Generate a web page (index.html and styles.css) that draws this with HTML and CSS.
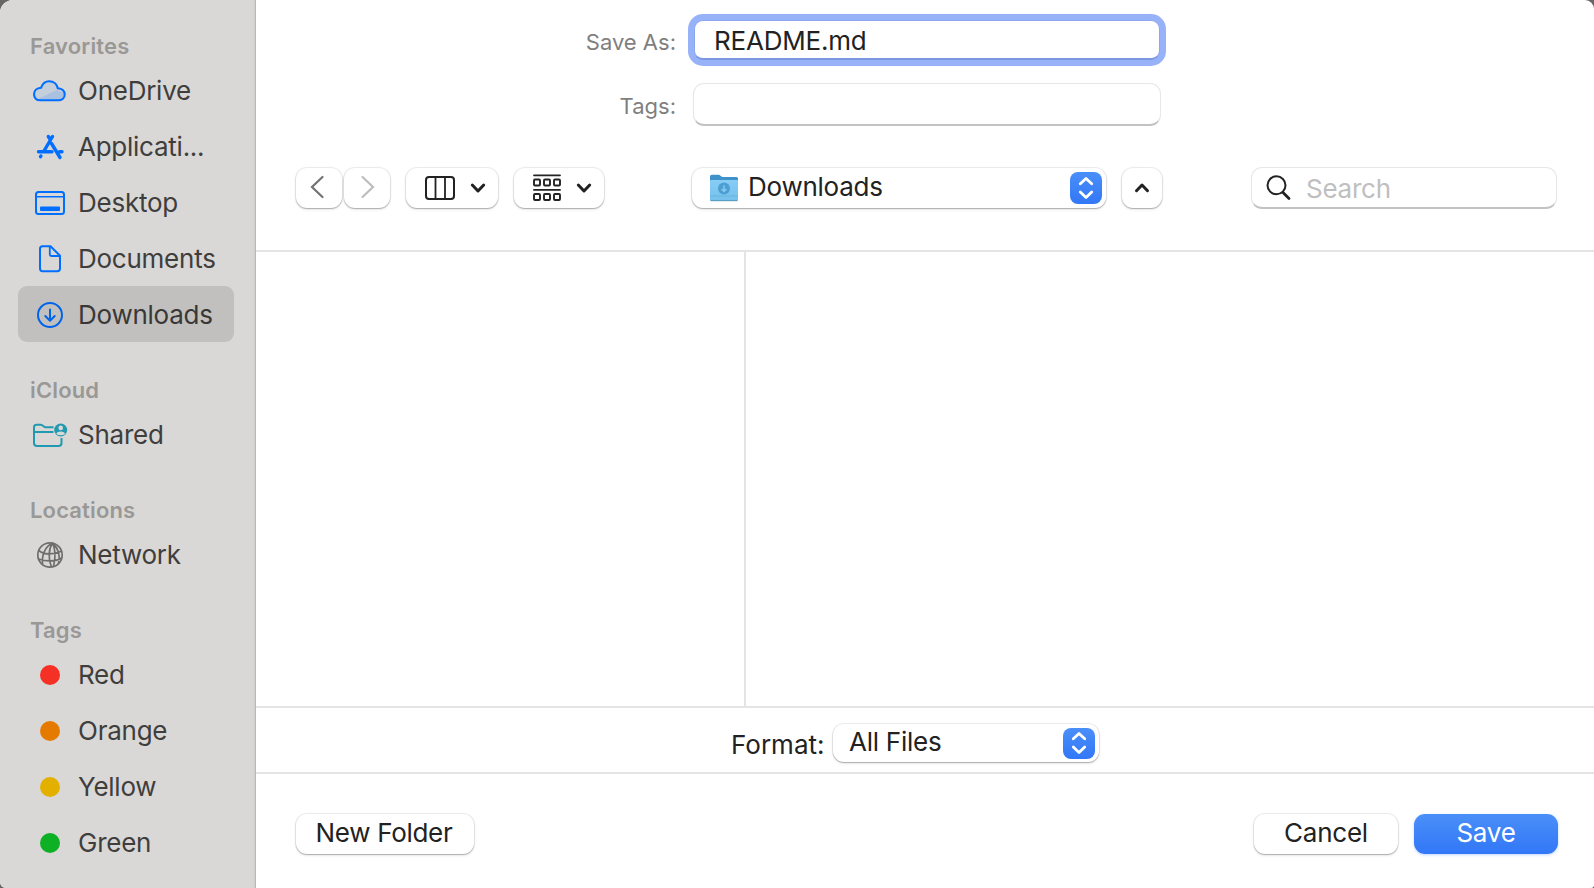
FILE: index.html
```
<!DOCTYPE html>
<html lang="en">
<head>
<meta charset="utf-8">
<title>Save</title>
<link rel="stylesheet" href="styles.css">
</head>
<body>
<div class="window">
  <nav class="sidebar">
    <h2 class="heading first">Favorites</h2>
    <a class="item"><span class="icon"><svg width="36" height="28" viewBox="0 0 36 28"><path d="M9 23.500C5.500 23.500 3 21 3 17.500C3 14 5.600 11.500 9.500 11.200C10.500 7.500 13.500 4.500 18 4.500C22.300 4.500 25.500 7 26.700 11.200C30.500 11.500 33.300 14 33.300 17.500C33.300 21 30.500 23.500 27 23.500Z" fill="#c5cfdb"/><path d="M6 22.500L25.500 13L32.500 16Q33.500 23 27 23.500H9Z" fill="#a9c0e0"/><path d="M9 23.300C5.500 23.300 3 21 3 17.300C3 13.900 5.700 11 10 10.800C11.200 7.500 14 4.300 18.200 4.300C22.800 4.300 26 7.500 26.800 11.200C31 11.600 33.700 14 33.700 17.500C33.700 20.800 31 23.300 27.300 23.300Z" fill="none" stroke="#006eff" stroke-width="2.100"/></svg></span>OneDrive</a>
    <a class="item"><span class="icon"><svg width="36" height="28" viewBox="0 0 36 28" fill="none" stroke="#006eff" stroke-width="3.400" stroke-linecap="round"><path d="M20.500 3.500L12 18M16.300 3.500L18.300 6.500M6.500 18.700H20M27.500 18.700H30M19.500 10.500L28 24.500"/><path d="M8.900 23L8.500 23.700"/></svg></span>Applicati...</a>
    <a class="item"><span class="icon"><svg width="36" height="28" viewBox="0 0 36 28"><rect x="4" y="3" width="28" height="22" rx="2.500" fill="none" stroke="#006eff" stroke-width="2"/><path d="M4 7.800H32" stroke="#006eff" stroke-width="1.600"/><rect x="8" y="17.500" width="20" height="4.500" rx="1" fill="#006eff"/></svg></span>Desktop</a>
    <a class="item"><span class="icon"><svg width="36" height="30" viewBox="0 0 36 30" fill="none" stroke="#006eff" stroke-width="2" stroke-linejoin="round"><path d="M10.500 2.200H18.500L28 11.700V24.500Q28 27.200 25.300 27.200H10.500Q8 27.200 8 24.500V4.700Q8 2.200 10.500 2.200Z"/><path d="M17.800 2.500V10.500Q17.800 12 19.300 12H27.500" stroke-width="1.800"/></svg></span>Documents</a>
    <a class="item selected"><span class="icon"><svg width="36" height="30" viewBox="0 0 36 30" fill="none" stroke="#0064ea" stroke-width="2" stroke-linecap="round" stroke-linejoin="round"><circle cx="18" cy="15" r="12"/><path d="M18 9.500V20.300M13.300 16L18 20.700L22.700 16"/></svg></span>Downloads</a>
    <h2 class="heading">iCloud</h2>
    <a class="item"><span class="icon"><svg width="38" height="28" viewBox="0 0 38 28" fill="none" stroke="#2199b0" stroke-width="2"><path d="M22.500 6.300H14L11.200 4.300Q10.500 3.800 9.500 3.800H5.500Q3 3.800 3 6.300V22Q3 25 6 25H27.500Q30.500 25 30.500 22V17M3 10.900H22.500"/><circle cx="29.700" cy="9" r="6.500" fill="#2199b0" stroke="none"/><circle cx="29.700" cy="6.900" r="2.300" fill="#d9d8d6" stroke="none"/><path d="M25.300 13Q25.800 10.500 29.700 10.500T34.100 13Q32 14.300 29.700 14.300T25.300 13Z" fill="#d9d8d6" stroke="none"/></svg></span>Shared</a>
    <h2 class="heading">Locations</h2>
    <a class="item"><span class="icon"><svg width="36" height="30" viewBox="0 0 36 30" fill="none" stroke="#6f6e6d" stroke-width="1.700"><circle cx="18" cy="15" r="12.200"/><path d="M20.500 3C14 6 9.500 14 10.500 24M20.500 3C16.500 9 16 19 19.500 27M20.500 3C23 8 24 16 21.500 26.500M20.500 3C26 8 28.500 15 26.500 23.500M6.800 10.500C12 15 22 15 29.800 11M6.500 19C13 21.500 24 22 29.500 18"/></svg></span>Network</a>
    <h2 class="heading">Tags</h2>
    <a class="item"><span class="icon"><i class="dot red"></i></span>Red</a>
    <a class="item"><span class="icon"><i class="dot orange"></i></span>Orange</a>
    <a class="item"><span class="icon"><i class="dot yellow"></i></span>Yellow</a>
    <a class="item"><span class="icon"><i class="dot green"></i></span>Green</a>
  </nav>
  <main class="main">
    <header class="header">
      <div class="field-row"><label class="label">Save As:</label><div class="field focused">README.md</div></div>
      <div class="field-row"><label class="label">Tags:</label><div class="field"></div></div>
      <div class="toolbar">
        <div class="nav-pair">
          <div class="control nav back"><svg width="16" height="24" viewBox="0 0 16 24" fill="none" stroke="#737373" stroke-width="2.200" stroke-linecap="round"><path d="M12.500 2L2 12L12.500 22"/></svg></div>
          <div class="control nav"><svg width="16" height="24" viewBox="0 0 16 24" fill="none" stroke="#bdbdbd" stroke-width="2.200" stroke-linecap="round"><path d="M3.500 2L14 12L3.500 22"/></svg></div>
        </div>
        <div class="control columns-view"><svg width="30" height="24" viewBox="0 0 30 24" fill="none" stroke="#222"><rect x="1" y="1" width="28" height="22" rx="3" stroke-width="2"/><path d="M10.500 1V23M20 1V23" stroke-width="1.800"/></svg><svg width="16" height="12" viewBox="0 0 16 12" fill="none" stroke="#222" stroke-width="3" stroke-linecap="round" stroke-linejoin="round"><path d="M2.300 3L8 9L13.700 3"/></svg></div>
        <div class="control group-view"><svg width="28" height="28" viewBox="0 0 28 28" fill="none" stroke="#222" stroke-width="1.900"><path d="M1 1.300H27M1 15.900H27" stroke-linecap="round" stroke-width="1.800"/><rect x="1" y="5.500" width="6" height="6" rx="1"/><rect x="11" y="5.500" width="6" height="6" rx="1"/><rect x="21" y="5.500" width="6" height="6" rx="1"/><rect x="1" y="20" width="6" height="6" rx="1"/><rect x="11" y="20" width="6" height="6" rx="1"/><rect x="21" y="20" width="6" height="6" rx="1"/></svg><svg width="16" height="12" viewBox="0 0 16 12" fill="none" stroke="#222" stroke-width="3" stroke-linecap="round" stroke-linejoin="round"><path d="M2.300 3L8 9L13.700 3"/></svg></div>
        <div class="control popup location">
          <svg width="30" height="30" viewBox="0 0 30 30"><defs><linearGradient id="front" x1="0" y1="0" x2="0" y2="1"><stop offset="0" stop-color="#87cdf6"/><stop offset="1" stop-color="#74c0ec"/></linearGradient></defs><path d="M1 3.500Q1 1.700 2.800 1.700H9.500Q10.500 1.700 11.500 2.700Q12.700 4 14 4H27.500Q29 4 29 5.500V10H1Z" fill="#3f92c9"/><path d="M1 8Q1 7 2 7H28Q29 7 29 8V26.500Q29 28 27.500 28H2.500Q1 28 1 26.500Z" fill="url(#front)"/><path d="M1 23H29" stroke="#65aedb" stroke-width=".8"/><path d="M1.500 27.700H28.500" stroke="#5597bd" stroke-width="1"/><circle cx="15" cy="15.500" r="6" fill="#4d9fd3"/><path d="M15 12.300V18M12.600 16L15 18.500L17.400 16" fill="none" stroke="#86c9f1" stroke-width="1.500"/></svg>
          <span class="popup-text">Downloads</span>
          <span class="stepper"><svg width="16" height="24" viewBox="0 0 16 24" fill="none" stroke="#fff" stroke-width="2.800" stroke-linecap="round" stroke-linejoin="round"><path d="M2.300 7.700L8 2.500L13.700 7.700M2.300 16L8 21.500L13.700 16"/></svg></span>
        </div>
        <div class="control collapse"><svg width="16" height="12" viewBox="0 0 16 12" fill="none" stroke="#222" stroke-width="3" stroke-linecap="round" stroke-linejoin="round"><path d="M2.500 8.700L8 3L13.500 8.700"/></svg></div>
        <div class="field search"><svg width="26" height="28" viewBox="0 0 26 28" fill="none" stroke="#222" stroke-linecap="round"><circle cx="10.500" cy="11.300" r="9" stroke-width="2"/><path d="M17 18.500L23 24.500" stroke-width="2.800"/></svg><span>Search</span></div>
      </div>
    </header>
    <section class="browser"><div class="column"></div><div class="column"></div></section>
    <section class="format">
      <span class="format-label">Format:</span>
      <div class="control popup filetype"><span class="popup-text">All Files</span><span class="stepper"><svg width="16" height="24" viewBox="0 0 16 24" fill="none" stroke="#fff" stroke-width="2.800" stroke-linecap="round" stroke-linejoin="round"><path d="M2.300 7.700L8 2.500L13.700 7.700M2.300 16L8 21.500L13.700 16"/></svg></span></div>
    </section>
    <footer class="footer">
      <button class="control button new-folder">New Folder</button>
      <button class="control button">Cancel</button>
      <button class="button save">Save</button>
    </footer>
  </main>
</div>
</body>
</html>
```
FILE: styles.css
```
* { box-sizing: border-box; }
body {
  margin: 0;
  background: #666;
  font: 26px/32px Inter, "Liberation Sans", sans-serif;
  letter-spacing: -0.25px;
  color: #222;
}
svg { display: block; flex: none; }
.window {
  display: flex;
  width: 1594px;
  height: 888px;
  overflow: hidden;
  background: #fff;
  border-radius: 13px 9px 3px 6px;
}
.sidebar {
  width: 256px;
  flex: none;
  padding: 0 22px 0 18px;
  background: linear-gradient(to right, #d9d8d6 252px, #d1d0ce 255px, #b9b8b6 255px);
  color: #3f3e3d;
}
.heading {
  height: 64px;
  margin: 0;
  padding: 32px 0 0 12px;
  font-size: 22px;
  font-weight: 600;
  letter-spacing: 0.15px;
  color: #999896;
}
.heading.first { height: 62px; padding-top: 30px; }
.item {
  display: flex;
  align-items: center;
  height: 56px;
  padding: 1px 0 0 13px;
  border-radius: 9px;
}
.item.selected { background: #c1c0be; color: #393837; }
.icon { width: 47px; flex: none; display: flex; }
.icon svg { margin-left: 1px; }
.icon svg[width="38"], .item:nth-of-type(1) .icon svg { margin-left: 0; }
.dot { width: 20px; height: 20px; margin-left: 9px; border-radius: 50%; }
.red { background: #f53126; }
.orange { background: #e47b00; }
.yellow { background: #e4b000; }
.green { background: #0eb026; }

.main { flex: 1; display: flex; flex-direction: column; }
.header { height: 252px; padding-top: 19px; border-bottom: 2px solid #e4e4e4; }
.field-row { display: flex; align-items: center; height: 42px; margin-bottom: 22px; }
.label {
  width: 420px;
  padding-top: 4px;
  font-size: 22px;
  letter-spacing: 0;
  text-align: right;
  color: #7f7f7f;
}
.field {
  width: 468px;
  height: 43px;
  margin: 1px 0 0 17px;
  padding: 5px 20px;
  border: 1px solid #e7e7e7;
  border-bottom: 2px solid #c2c2c2;
  border-radius: 11px;
  background: #fff;
}
.field.focused {
  width: 466px;
  height: 40px;
  margin: 0 0 0 18px;
  padding: 4px 19px;
  border: 1px solid #8ba7ef;
  border-bottom: 2px solid #7a97df;
  box-shadow: 0 0 0 6px #97b2f8;
  border-radius: 9px;
  letter-spacing: -0.2px;
}
.toolbar { display: flex; align-items: center; height: 40px; margin: 43px 37px 0 40px; }
.control {
  display: flex;
  align-items: center;
  height: 40px;
  border-radius: 11px;
  background: #fff;
  box-shadow: 0 0 1px 1px rgba(0,0,0,.09), 0 1px 1px rgba(0,0,0,.2), 0 2px 3px rgba(0,0,0,.07);
}
.nav-pair { display: flex; gap: 2px; }
.nav { width: 46px; justify-content: center; padding-bottom: 2px; }
.back { padding-right: 2px; }
.columns-view { width: 92px; margin-left: 16px; padding: 0 12px 1px 19px; justify-content: space-between; }
.group-view { width: 90px; margin-left: 16px; padding: 0 12px 0 19px; justify-content: space-between; }
.popup { padding-right: 4px; }
.popup-text { flex: 1; padding-bottom: 2px; }
.location { width: 414px; margin-left: 88px; padding-left: 17px; }
.location .popup-text { padding-left: 9px; }
.stepper {
  display: flex;
  align-items: center;
  justify-content: center;
  width: 32px;
  height: 32px;
  border-radius: 8px;
  background: linear-gradient(#4a8ff8, #3277f6);
}
.collapse { width: 40px; margin-left: 16px; justify-content: center; }
.search {
  display: flex;
  align-items: center;
  gap: 14px;
  width: 306px;
  height: 42px;
  margin: 0 0 0 auto;
  padding: 0 14px;
  color: #bfbfbf;
}
.search span { padding-top: 3px; }

.browser { display: flex; height: 454px; }
.column { flex: 1; }
.column:first-child { flex: none; width: 490px; border-right: 2px solid #e4e4e4; }
.format {
  display: flex;
  align-items: center;
  height: 68px;
  padding-left: 475px;
  border-top: 2px solid #e4e4e4;
  border-bottom: 2px solid #e4e4e4;
}
.format-label { width: 102px; padding-top: 9px; letter-spacing: 0; }
.filetype { width: 266px; height: 38px; margin-top: 5px; padding-left: 16px; }
.filetype .stepper { height: 31px; margin-top: 1px; }
.footer { display: flex; gap: 16px; padding: 40px 36px 0 40px; }
.button {
  height: 40px;
  width: 144px;
  padding: 0 0 3px;
  border: 0;
  border-radius: 11px;
  justify-content: center;
  font: inherit;
  letter-spacing: inherit;
  color: #222;
}
.new-folder { width: 178px; margin-right: auto; padding-right: 2px; letter-spacing: -0.3px; }
.save { color: #fff; background: linear-gradient(#4a8ff8, #3277f6); box-shadow: 0 1px 3px rgba(50,119,246,.3); }
```
